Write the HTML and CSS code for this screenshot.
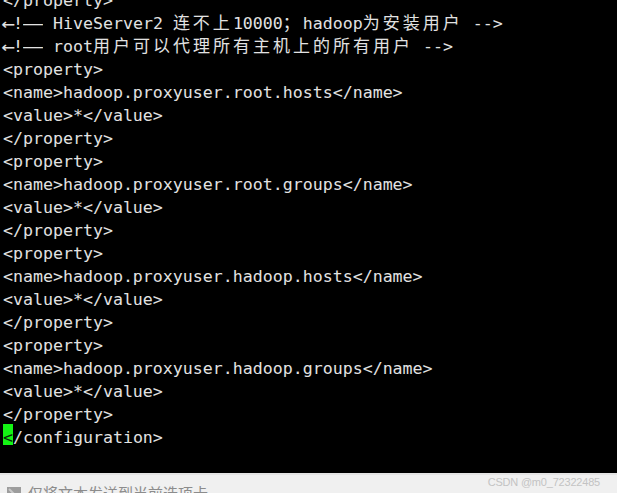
FILE: index.html
```html
<!DOCTYPE html>
<html lang="zh">
<head>
<meta charset="utf-8">
<title>hive-site</title>
<link rel="stylesheet" href="styles.css">
</head>
<body>
<div class="app">
  <div class="term">
    <div class="code">
      <div class="line">&lt;/property&gt;</div>
      <div class="line"><span class="arrow">←</span>!<span class="dash">—</span> HiveServer2 <span class="cjk">连不上</span>10000<span class="cjk">；</span>hadoop<span class="cjk">为安装用户</span> --&gt;</div>
      <div class="line"><span class="arrow">←</span>!<span class="dash">—</span> root<span class="cjk">用户可以代理所有主机上的所有用户</span> --&gt;</div>
      <div class="line">&lt;property&gt;</div>
      <div class="line">&lt;name&gt;hadoop.proxyuser.root.hosts&lt;/name&gt;</div>
      <div class="line">&lt;value&gt;*&lt;/value&gt;</div>
      <div class="line">&lt;/property&gt;</div>
      <div class="line">&lt;property&gt;</div>
      <div class="line">&lt;name&gt;hadoop.proxyuser.root.groups&lt;/name&gt;</div>
      <div class="line">&lt;value&gt;*&lt;/value&gt;</div>
      <div class="line">&lt;/property&gt;</div>
      <div class="line">&lt;property&gt;</div>
      <div class="line">&lt;name&gt;hadoop.proxyuser.hadoop.hosts&lt;/name&gt;</div>
      <div class="line">&lt;value&gt;*&lt;/value&gt;</div>
      <div class="line">&lt;/property&gt;</div>
      <div class="line">&lt;property&gt;</div>
      <div class="line">&lt;name&gt;hadoop.proxyuser.hadoop.groups&lt;/name&gt;</div>
      <div class="line">&lt;value&gt;*&lt;/value&gt;</div>
      <div class="line">&lt;/property&gt;</div>
      <div class="line"><span class="cursor">&lt;</span>/configuration&gt;</div>
    </div>
  </div>
  <div class="bar">
    <svg class="bar-icon" width="14" height="14" viewBox="0 0 14 14">
      <rect x="0" y="0" width="14" height="14" fill="#9d9d9d"/>
      <path d="M2 2 L12 12" stroke="#c9c9c9" stroke-width="2"/>
    </svg>
    <span class="bar-text">仅将文本发送到当前选项卡</span>
  </div>
  <div class="watermark">CSDN @m0_72322485</div>
</div>
</body>
</html>
```
FILE: styles.css
```css
html, body {
  margin: 0;
  padding: 0;
  background: #000;
}
.app {
  position: relative;
  width: 617px;
  height: 493px;
  display: flex;
  flex-direction: column;
  overflow: hidden;
}
.term {
  height: 473px;
  flex: none;
  background: #000;
  overflow: hidden;
}
.code {
  margin-top: -11.5px;
  padding-left: 3px;
  font-family: "DejaVu Sans Mono", monospace;
  font-size: 16.6px;
  line-height: 23px;
  color: #e2e2e2;
}
.line {
  height: 23px;
  white-space: pre;
  overflow: visible;
}
.cjk {
  font-family: "Noto Sans CJK SC", sans-serif;
  font-size: 17px;
  letter-spacing: 3px;
  line-height: 1;
}
.arrow {
  display: inline-block;
  width: 10px;
  transform: scale(1.35, 1.2);
  transform-origin: center 60%;
  line-height: 1;
}
.dash {
  display: inline-block;
  width: 20px;
  transform: scaleX(2);
  transform-origin: left center;
  line-height: 1;
}
.cursor {
  display: inline-block;
  vertical-align: top;
  margin-top: -2px;
  width: 10px;
  height: 15px;
  line-height: 15px;
  padding-top: 6px;
  background: #14f414;
  color: #0a2a0a;
}
.bar {
  flex: 1;
  background: #f0f0f0;
  border-top: 2px solid #e4e4e4;
  display: flex;
  align-items: flex-start;
  gap: 7px;
  padding: 10px 0 0 7px;
  overflow: hidden;
}
.bar-icon {
  flex: none;
  margin-top: 2px;
}
.bar-text {
  font-family: "Noto Sans CJK SC", sans-serif;
  font-size: 15px;
  line-height: 1;
  color: #8c8c8c;
  white-space: nowrap;
}
.watermark {
  position: absolute;
  right: 17px;
  top: 476px;
  font-family: "Liberation Sans", Arial, sans-serif;
  font-size: 11px;
  color: #c3c3c3;
  letter-spacing: -0.2px;
}
```
